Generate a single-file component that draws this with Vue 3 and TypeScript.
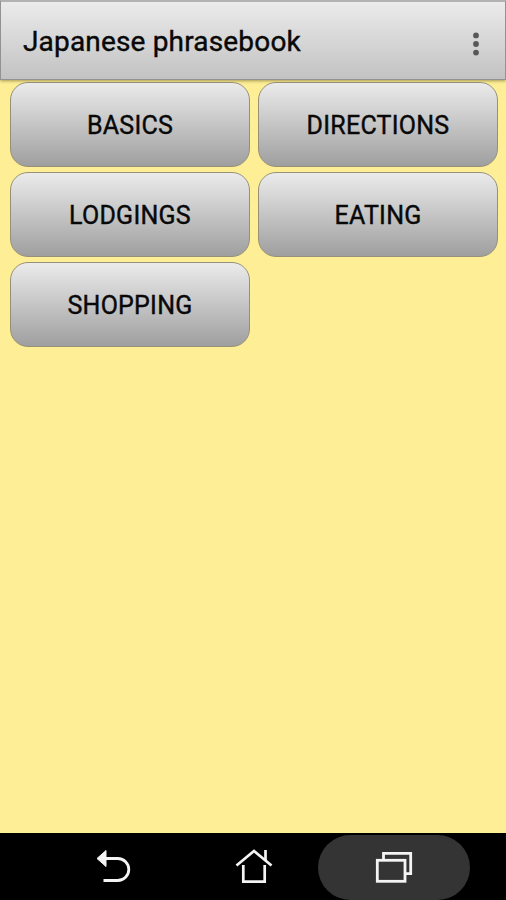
<script setup lang="ts">
interface Category {
  id: string
  label: string
}

const title = 'Japanese phrasebook'
const categories: Category[] = [
  { id: 'basics', label: 'BASICS' },
  { id: 'directions', label: 'DIRECTIONS' },
  { id: 'lodgings', label: 'LODGINGS' },
  { id: 'eating', label: 'EATING' },
  { id: 'shopping', label: 'SHOPPING' },
]
</script>

<template>
  <div class="screen">
    <header class="app-bar">
      <h1 class="title">{{ title }}</h1>
      <button class="menu" type="button">
        <svg width="10" height="26" viewBox="0 0 10 26">
          <circle cx="5" cy="4.4" r="2.9" />
          <circle cx="5" cy="13" r="2.9" />
          <circle cx="5" cy="21.6" r="2.9" />
        </svg>
      </button>
    </header>

    <main class="grid">
      <button v-for="c in categories" :key="c.id" class="category" type="button">
        <span>{{ c.label }}</span>
      </button>
    </main>

    <nav class="nav-bar">
      <button class="nav-button" type="button">
        <svg width="36" height="36" viewBox="0 0 36 36">
          <path d="M9 9.5H21.8A11 11 0 0 1 21.8 31.5H7.5" fill="none" stroke="#f4f4f4" stroke-width="2.8" />
          <path d="M1 9.5L10 1.5V17.5Z" fill="#f4f4f4" stroke="#f4f4f4" stroke-linejoin="round" />
        </svg>
      </button>
      <button class="nav-button" type="button">
        <svg width="38" height="36" viewBox="0 0 38 36" fill="none" stroke="#f4f4f4" stroke-width="2.7">
          <path d="M1.5 16.5L19 1.9L36.5 16.5" />
          <path d="M30.5 1V11" />
          <path d="M8.3 16V32.7H29.7V16" />
        </svg>
      </button>
      <button class="nav-button active" type="button">
        <svg width="38" height="34" viewBox="0 0 38 34" fill="none" stroke="#f4f4f4" stroke-width="2.8">
          <rect x="2.3" y="9.3" width="27.7" height="21" />
          <path d="M8.5 8V2.3H35.7V22.7H31" />
        </svg>
      </button>
    </nav>
  </div>
</template>

<style>
body {
  margin: 0;
}
</style>

<style scoped>
.screen {
  display: flex;
  flex-direction: column;
  width: 506px;
  height: 900px;
  overflow: hidden;
  background: #feef97;
  font-family: Roboto, "Liberation Sans", sans-serif;
  color: #080808;
}

button {
  margin: 0;
  padding: 0;
  border: 0;
  background: none;
  color: inherit;
  font-family: inherit;
}

svg {
  display: block;
}

.app-bar {
  box-sizing: border-box;
  display: flex;
  align-items: center;
  justify-content: space-between;
  height: 80px;
  padding: 2px 24px 0 22px;
  border: 1px solid #929292;
  border-top: 2px solid #b2b2b2;
  background: linear-gradient(#ebebeb, #c2c2c2);
  box-shadow: 0 1px 3px rgba(90, 80, 30, 0.55);
}

.title {
  margin: 0;
  font-size: 28px;
  font-weight: 400;
  letter-spacing: 0.17px;
  -webkit-text-stroke: 0.4px currentColor;
  line-height: 32px;
  white-space: nowrap;
}

.menu {
  margin-top: 5px;
  fill: #585858;
}

.grid {
  flex: 1;
  display: grid;
  grid-template-columns: 240px 240px;
  grid-auto-rows: 85px;
  align-content: start;
  gap: 5px 8px;
  padding: 2px 8px 0 10px;
}

.category {
  box-sizing: border-box;
  border: 1px solid #979078;
  border-radius: 18px;
  background: linear-gradient(#ebebeb, #9f9f9f);
  font-size: 25px;
  font-weight: 400;
  letter-spacing: 0.25px;
  -webkit-text-stroke: 0.4px currentColor;
  line-height: 30px;
  padding-top: 2px;
}

.nav-bar {
  display: flex;
  align-items: center;
  height: 67px;
  padding-left: 38px;
  background: #000;
}

.nav-button {
  display: flex;
  align-items: center;
  justify-content: center;
  width: 152px;
  height: 65px;
  margin-right: -12px;
}

.nav-button.active {
  margin-top: 2px;
  border-radius: 33px;
  background: #343434;
}
</style>
